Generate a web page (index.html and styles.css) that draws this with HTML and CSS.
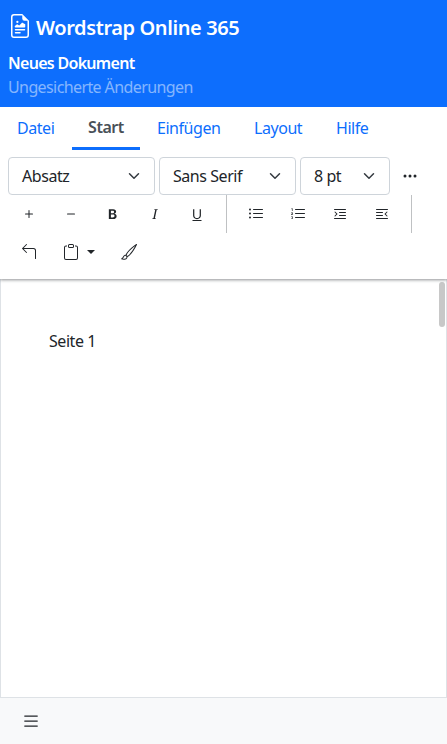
FILE: index.html
```html
<!DOCTYPE html>
<html lang="de">
<head>
<meta charset="utf-8">
<title>Wordstrap Online 365</title>
<link rel="stylesheet" href="styles.css">
</head>
<body>
<header class="masthead">
  <h1 class="brand"><svg class="brand-icon" viewBox="0 0 16 16"><path d="M14 4.500V14a2 2 0 0 1-2 2H4a2 2 0 0 1-2-2V2a2 2 0 0 1 2-2h5.500L14 4.500zm-3 0A1.500 1.500 0 0 1 9.500 3V1H4a1 1 0 0 0-1 1v12a1 1 0 0 0 1 1h8a1 1 0 0 0 1-1V4.500h-2z"/><path d="M4.500 12.500A.5.5 0 0 1 5 12h3a.5.5 0 0 1 0 1H5a.5.5 0 0 1-.5-.5zm0-2A.5.5 0 0 1 5 10h6a.5.5 0 0 1 0 1H5a.5.5 0 0 1-.5-.5zm1.639-3.708 1.330.886 1.854-1.855a.25.25 0 0 1 .289-.047l1.888.974V8.500a.5.5 0 0 1-.5.5H5a.5.5 0 0 1-.5-.5V8s1.540-1.274 1.639-1.208zM6.250 6a.75.75 0 1 0 0-1.500.75.75 0 0 0 0 1.500z"/></svg><span>Wordstrap Online 365</span></h1>
  <p class="doc-name">Neues Dokument</p>
  <p class="doc-state">Ungesicherte Änderungen</p>
</header>
<nav class="tabs">
  <a class="tab datei">Datei</a>
  <a class="tab active">Start</a>
  <a class="tab einfuegen">Einfügen</a>
  <a class="tab layout">Layout</a>
  <a class="tab">Hilfe</a>
</nav>
<section class="toolbar">
  <div class="row selects">
    <div class="select style"><span>Absatz</span><svg viewBox="0 0 16 16"><path class="chevron" d="m2 5 6 6 6-6"/></svg></div>
    <div class="select family"><span>Sans Serif</span><svg viewBox="0 0 16 16"><path class="chevron" d="m2 5 6 6 6-6"/></svg></div>
    <div class="select size"><span>8 pt</span><svg viewBox="0 0 16 16"><path class="chevron" d="m2 5 6 6 6-6"/></svg></div>
    <button class="btn"><svg viewBox="0 0 16 16"><path d="M3 9.500a1.500 1.500 0 1 1 0-3 1.500 1.500 0 0 1 0 3zm5 0a1.500 1.500 0 1 1 0-3 1.500 1.500 0 0 1 0 3zm5 0a1.500 1.500 0 1 1 0-3 1.500 1.500 0 0 1 0 3z"/></svg></button>
  </div>
  <div class="row">
    <button class="btn"><svg viewBox="0 0 16 16"><path d="M8 4a.5.5 0 0 1 .5.5v3h3a.5.5 0 0 1 0 1h-3v3a.5.5 0 0 1-1 0v-3h-3a.5.5 0 0 1 0-1h3v-3A.5.5 0 0 1 8 4z"/></svg></button>
    <button class="btn"><svg viewBox="0 0 16 16"><path d="M4 8a.5.5 0 0 1 .5-.5h7a.5.5 0 0 1 0 1h-7A.5.5 0 0 1 4 8z"/></svg></button>
    <button class="btn"><svg viewBox="0 0 16 16"><path d="M8.210 13c2.106 0 3.412-1.087 3.412-2.823 0-1.306-.984-2.283-2.324-2.386v-.055a2.176 2.176 0 0 0 1.852-2.140c0-1.510-1.162-2.460-3.014-2.460H3.843V13H8.210zM5.908 4.674h1.696c.963 0 1.517.451 1.517 1.244 0 .834-.629 1.320-1.730 1.320H5.908V4.673zm0 6.788V8.598h1.730c1.217 0 1.880.492 1.880 1.415 0 .943-.643 1.449-1.832 1.449H5.907z"/></svg></button>
    <button class="btn"><svg viewBox="0 0 16 16"><path d="M7.991 11.674 9.530 4.455c.123-.595.246-.710 1.347-.807l.110-.520H7.211l-.110.520c1.060.096 1.128.212 1.005.807L6.570 11.674c-.123.595-.246.710-1.346.806l-.110.520h3.774l.110-.520c-1.060-.095-1.129-.211-1.006-.806z"/></svg></button>
    <button class="btn"><svg viewBox="0 0 16 16"><path d="M5.313 3.136h-1.230V9.540c0 2.105 1.470 3.623 3.917 3.623s3.917-1.518 3.917-3.623V3.136h-1.230v6.323c0 1.490-.978 2.570-2.687 2.570-1.709 0-2.687-1.080-2.687-2.570V3.136zM12.500 15h-9v-1h9v1z"/></svg></button>
    <span class="divider"></span>
    <button class="btn"><svg viewBox="0 0 16 16"><path d="M5 11.500a.5.5 0 0 1 .5-.5h9a.5.5 0 0 1 0 1h-9a.5.5 0 0 1-.5-.5zm0-4a.5.5 0 0 1 .5-.5h9a.5.5 0 0 1 0 1h-9a.5.5 0 0 1-.5-.5zm0-4a.5.5 0 0 1 .5-.5h9a.5.5 0 0 1 0 1h-9a.5.5 0 0 1-.5-.5zm-3 1a1 1 0 1 0 0-2 1 1 0 0 0 0 2zm0 4a1 1 0 1 0 0-2 1 1 0 0 0 0 2zm0 4a1 1 0 1 0 0-2 1 1 0 0 0 0 2z"/></svg></button>
    <button class="btn"><svg viewBox="0 0 16 16"><path d="M5 11.500a.5.5 0 0 1 .5-.5h9a.5.5 0 0 1 0 1h-9a.5.5 0 0 1-.5-.5zm0-4a.5.5 0 0 1 .5-.5h9a.5.5 0 0 1 0 1h-9a.5.5 0 0 1-.5-.5zm0-4a.5.5 0 0 1 .5-.5h9a.5.5 0 0 1 0 1h-9a.5.5 0 0 1-.5-.5z"/><path d="M1.713 11.865v-.474H2c.217 0 .363-.137.363-.317 0-.185-.158-.310-.361-.310-.223 0-.367.152-.373.310h-.590c.016-.467.373-.787.986-.787.588-.002.954.291.957.703a.595.595 0 0 1-.492.594v.033a.615.615 0 0 1 .569.631c.003.533-.502.800-1.051.800-.656 0-1-.370-1.008-.794h.582c.008.178.186.306.422.309.254 0 .424-.145.422-.350-.002-.195-.155-.348-.414-.348h-.300zm-.004-4.699h-.604v-.035c0-.408.295-.844.958-.844.583 0 .960.326.960.756 0 .389-.257.617-.476.848l-.537.572v.030h1.054V9H1.143v-.395l.957-.990c.138-.142.293-.304.293-.508 0-.180-.147-.320-.342-.320a.33.33 0 0 0-.342.338v.041zM2.564 5h-.635V2.924h-.031l-.598.420v-.567l.629-.443h.635V5z"/></svg></button>
    <button class="btn"><svg viewBox="0 0 16 16"><path d="M2 3.500a.5.5 0 0 1 .5-.5h11a.5.5 0 0 1 0 1h-11a.5.5 0 0 1-.5-.5zm.646 2.146a.5.5 0 0 1 .708 0l2 2a.5.5 0 0 1 0 .708l-2 2a.5.5 0 0 1-.708-.708L4.293 8 2.646 6.354a.5.5 0 0 1 0-.708zM7 6.500a.5.5 0 0 1 .5-.5h6a.5.5 0 0 1 0 1h-6a.5.5 0 0 1-.5-.5zm0 3a.5.5 0 0 1 .5-.5h6a.5.5 0 0 1 0 1h-6a.5.5 0 0 1-.5-.5zm-5 3a.5.5 0 0 1 .5-.5h11a.5.5 0 0 1 0 1h-11a.5.5 0 0 1-.5-.5z"/></svg></button>
    <button class="btn"><svg viewBox="0 0 16 16"><path d="M2 3.500a.5.5 0 0 1 .5-.5h11a.5.5 0 0 1 0 1h-11a.5.5 0 0 1-.5-.5zm10.646 2.146a.5.5 0 0 1 .708.708L11.707 8l1.647 1.646a.5.5 0 0 1-.708.708l-2-2a.5.5 0 0 1 0-.708l2-2zM2 6.500a.5.5 0 0 1 .5-.5h6a.5.5 0 0 1 0 1h-6a.5.5 0 0 1-.5-.5zm0 3a.5.5 0 0 1 .5-.5h6a.5.5 0 0 1 0 1h-6a.5.5 0 0 1-.5-.5zm0 3a.5.5 0 0 1 .5-.5h11a.5.5 0 0 1 0 1h-11a.5.5 0 0 1-.5-.5z"/></svg></button>
    <span class="divider"></span>
  </div>
  <div class="row">
    <button class="btn"><svg viewBox="0 0 16 16"><path d="M1.146 4.854a.5.5 0 0 1 0-.708l4-4a.5.5 0 1 1 .708.708L2.707 4H12.500A2.500 2.500 0 0 1 15 6.500v8a.5.5 0 0 1-1 0v-8A1.500 1.500 0 0 0 12.500 5H2.707l3.147 3.146a.5.5 0 1 1-.708.708l-4-4z"/></svg></button>
    <button class="btn menu"><svg viewBox="0 0 16 16"><path d="M4 1.500H3a2 2 0 0 0-2 2V14a2 2 0 0 0 2 2h10a2 2 0 0 0 2-2V3.500a2 2 0 0 0-2-2h-1v1h1a1 1 0 0 1 1 1V14a1 1 0 0 1-1 1H3a1 1 0 0 1-1-1V3.500a1 1 0 0 1 1-1h1v-1z"/><path d="M9.500 1a.5.5 0 0 1 .5.5v1a.5.5 0 0 1-.5.5h-3a.5.5 0 0 1-.5-.5v-1a.5.5 0 0 1 .5-.5h3zm-3-1A1.500 1.500 0 0 0 5 1.500v1A1.500 1.500 0 0 0 6.500 4h3A1.500 1.500 0 0 0 11 2.500v-1A1.500 1.500 0 0 0 9.500 0h-3z"/></svg><span class="caret"></span></button>
    <button class="btn"><svg viewBox="0 0 16 16"><path d="M15.825.120a.5.5 0 0 1 .132.584c-1.530 3.430-4.743 8.170-7.095 10.640a6.067 6.067 0 0 1-2.373 1.534c-.018.227-.060.538-.160.868-.201.659-.667 1.479-1.708 1.740a8.118 8.118 0 0 1-3.078.132 3.659 3.659 0 0 1-.562-.135 1.382 1.382 0 0 1-.466-.247.714.714 0 0 1-.204-.288.622.622 0 0 1 .004-.443c.095-.245.316-.380.461-.452.394-.197.625-.453.867-.826.095-.144.184-.297.287-.472l.117-.198c.151-.255.326-.540.546-.848.528-.739 1.201-.925 1.746-.896.126.007.243.025.348.048.062-.172.142-.380.238-.608.261-.619.658-1.419 1.187-2.069 2.176-2.670 6.180-6.206 9.117-8.104a.5.5 0 0 1 .596.040zM4.705 11.912a1.230 1.230 0 0 0-.419-.100c-.246-.013-.573.050-.879.479-.197.275-.355.532-.500.777l-.105.177c-.106.181-.213.362-.320.528a3.390 3.390 0 0 1-.760.861c.690.112 1.736.111 2.657-.120.559-.139.843-.569.993-1.060a3.122 3.122 0 0 0 .126-.750l-.793-.792zm1.440.026c.120-.040.277-.100.458-.183a5.068 5.068 0 0 0 1.535-1.100c1.900-1.996 4.412-5.570 6.052-8.631-2.590 1.927-5.566 4.660-7.302 6.792-.442.543-.795 1.243-1.042 1.826-.121.288-.214.540-.275.720v.001l.575.575zm-4.973 3.040.007-.005a.031.031 0 0 1-.007.004zm3.582-3.043.002.001h-.002z"/></svg></button>
  </div>
</section>
<main class="canvas"><div class="page">Seite 1</div><span class="scroll-thumb"></span></main>
<footer class="statusbar"><button class="btn"><svg viewBox="0 0 16 16"><path d="M2.500 12a.5.5 0 0 1 .5-.5h10a.5.5 0 0 1 0 1H3a.5.5 0 0 1-.5-.5zm0-4a.5.5 0 0 1 .5-.5h10a.5.5 0 0 1 0 1H3a.5.5 0 0 1-.5-.5zm0-4a.5.5 0 0 1 .5-.5h10a.5.5 0 0 1 0 1H3a.5.5 0 0 1-.5-.5z"/></svg></button></footer>
</body>
</html>
```
FILE: styles.css
```css
* { box-sizing: border-box; }
body { margin: 0; height: 744px; display: flex; flex-direction: column; overflow: hidden; background: #fff; color: #212529; font: 16px/24px "Noto Sans", sans-serif; letter-spacing: -.45px; }
h1, p { margin: 0; }
svg { width: 16px; height: 16px; fill: currentColor; flex: none; }
.masthead { height: 107px; padding: 8px; background: #0d6efd; color: #fff; }
.brand { display: flex; align-items: center; gap: 4px; height: 40px; font-size: 20px; font-weight: 600; letter-spacing: -.4px; white-space: nowrap; }
.brand-icon { width: 24px; height: 24px; margin-top: -4px; }
.doc-name { margin-top: 3px; font-weight: 600; letter-spacing: -.7px; }
.doc-state { color: rgba(255, 255, 255, .5); letter-spacing: -.6px; }
.tabs { display: flex; height: 43px; }
.tab { padding: 9px 0 0 17px; color: #0d6efd; }
.datei { width: 72px; }
.einfuegen { width: 97px; }
.layout { width: 82px; }
.tab.active { width: 68px; padding: 8px 0 0; text-align: center; color: #495057; font-weight: 600; border-bottom: 3px solid #0d6efd; }
.toolbar { position: relative; z-index: 1; height: 129px; padding: 7px 8px 0; background: #fff; box-shadow: 0 1px 3px rgba(33, 37, 41, .5); clip-path: inset(0 0 -6px 0); }
.row { display: flex; height: 38px; }
.selects { gap: 4px; }
.select { display: flex; align-items: center; justify-content: space-between; height: 38px; padding: 0 14px 0 13px; border: 1px solid #ced4da; border-radius: 4px; white-space: nowrap; }
.select svg { width: 12px; height: 12px; }
.style { width: 147px; }
.family { width: 137px; }
.size { width: 90px; }
.selects .btn { margin-left: -5px; }
.chevron { fill: none; stroke: #343a40; stroke-width: 2; stroke-linecap: round; stroke-linejoin: round; }
.btn { display: flex; align-items: center; justify-content: center; flex: none; width: 42px; height: 38px; padding: 0; border: 0; background: none; color: #212529; }
.menu { width: 58px; gap: 8px; }
.caret { border: 4px solid transparent; border-top-color: #212529; border-bottom: 0; }
.divider { width: 1px; margin: 0 8px; background: #bfc1c3; }
.canvas { position: relative; height: 419px; border: 1px solid #dee2e6; border-top: 0; }
.page { padding: 50px 48px; }
.scroll-thumb { position: absolute; top: 3px; right: 1px; width: 6px; height: 45px; border-radius: 3px; background: #c8c8c8; }
.statusbar { height: 46px; padding: 4px 10px; background: #f8f9fa; }
.statusbar svg { width: 20px; height: 20px; }
```
